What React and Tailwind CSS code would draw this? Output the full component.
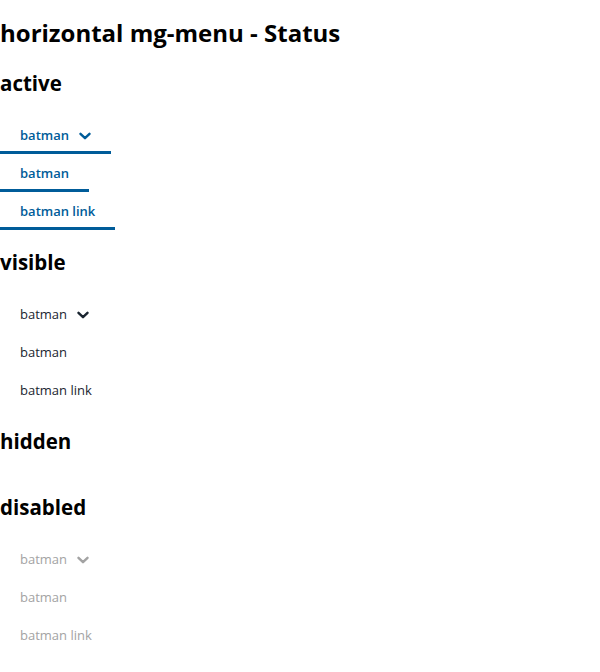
import React from "react";

const items = [
  { label: "batman", dropdown: true },
  { label: "batman" },
  { label: "batman link", link: true },
];

const styles = {
  active: {
    text: "text-[#005c99] font-semibold",
    border: "border-[#005c99]",
  },
  visible: {
    text: "text-[#1a2530] font-normal",
    border: "border-transparent",
  },
  disabled: {
    text: "text-[#a3a3a3] font-normal",
    border: "border-transparent",
  },
};

const Chevron = () => (
  <svg
    width="12"
    height="8"
    viewBox="0 0 12 8"
    fill="none"
    stroke="currentColor"
    strokeWidth="2.4"
    strokeLinecap="round"
    strokeLinejoin="round"
    className="ml-[10px]"
  >
    <path d="M1.5 1.8 6 6.2l4.5-4.4" />
  </svg>
);

const Menu = ({ status }) => {
  if (status === "hidden") return <div className="mt-[19px]" />;
  const s = styles[status];
  return (
    <ul className="mt-[18px] flex flex-col">
      {items.map((item, i) => (
        <li key={i} className="flex">
          <a
            className={`flex h-[38px] items-center border-b-[3px] px-5 pt-[4px] text-[13px] ${s.text} ${s.border}`}
          >
            {item.label}
            {item.dropdown && <Chevron />}
          </a>
        </li>
      ))}
    </ul>
  );
};

export default function App() {
  const sections = ["active", "visible", "hidden", "disabled"];
  return (
    <div className="flex flex-col bg-white pb-4 font-['Open_Sans',sans-serif] text-black">
      <h1 className="mt-[17px] mb-[2px] text-[24px] font-bold leading-[32px]">
        horizontal mg-menu - Status
      </h1>
      {sections.map((name) => (
        <section key={name} className="flex flex-col">
          <h2 className="mt-[16px] pt-[1px] text-[20.5px] font-bold leading-[30px]">
            {name}
          </h2>
          <Menu status={name} />
        </section>
      ))}
    </div>
  );
}
